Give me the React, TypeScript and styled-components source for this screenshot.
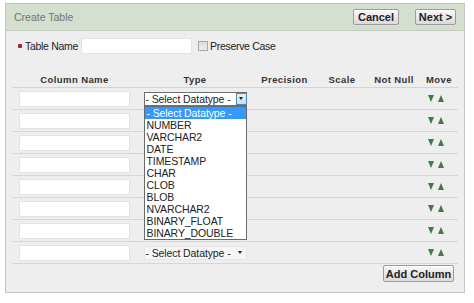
import React from "react";
import styled, { createGlobalStyle } from "styled-components";

const GlobalStyle = createGlobalStyle`
  html, body {
    margin: 0;
    padding: 0;
    background: #ffffff;
    font-family: "Liberation Sans", Arial, sans-serif;
  }
`;

const datatypes = [
  "- Select Datatype -",
  "NUMBER",
  "VARCHAR2",
  "DATE",
  "TIMESTAMP",
  "CHAR",
  "CLOB",
  "BLOB",
  "NVARCHAR2",
  "BINARY_FLOAT",
  "BINARY_DOUBLE",
];

const headers = ["Column Name", "Type", "Precision", "Scale", "Not Null", "Move"];

export default function App() {
  const rows = Array.from({ length: 8 }, (_, i) => i);

  const typeCell = (i: number) => {
    if (i === 0) {
      return (
        <SelectWrap>
          <OpenSelect>
            <SelectText>- Select Datatype -</SelectText>
            <DropBtn>
              <Caret />
            </DropBtn>
          </OpenSelect>
          <List>
            {datatypes.map((d, k) => (
              <Option key={d} $active={k === 0}>
                {d}
              </Option>
            ))}
          </List>
        </SelectWrap>
      );
    }
    // rows hidden under the open list
    if (i < 7) return <HiddenSelect />;
    return (
      <FlatSelect>
        <SelectText>- Select Datatype -</SelectText>
        <Caret />
      </FlatSelect>
    );
  };

  return (
    <>
      <GlobalStyle />
      <Page>
        <Panel>
          <Header>
            <Title>Create Table</Title>
            <HeaderButtons>
              <Button $w={46}>Cancel</Button>
              <Button $w={41}>Next &gt;</Button>
            </HeaderButtons>
          </Header>

          <NameRow>
            <Required />
            <Label>Table Name</Label>
            <TextInput $w={111} />
            <Check />
            <Label>Preserve Case</Label>
          </NameRow>

          <Grid>
            <HeadRow>
              {headers.map((h) => (
                <HeadCell key={h}>{h}</HeadCell>
              ))}
            </HeadRow>
            {rows.map((i) => (
              <Row key={i}>
                <Cell>
                  <TextInput $w={111} />
                </Cell>
                <Cell>{typeCell(i)}</Cell>
                <Cell />
                <Cell />
                <Cell />
                <MoveCell>
                  <Arrow $down />
                  <Arrow />
                </MoveCell>
              </Row>
            ))}
          </Grid>

          <Footer>
            <Button $w={71} $h={17}>Add Column</Button>
          </Footer>
        </Panel>
      </Page>
    </>
  );
}

const Page = styled.div`
  padding: 3px 0 0 5px;
`;

const Panel = styled.div`
  width: 458px;
  height: 288px;
  border: 1px solid #c6c6c6;
  background: #eeeeee;
  display: flex;
  flex-direction: column;
`;

const Header = styled.div`
  height: 26px;
  border-bottom: 1px solid #c3ccbf;
  background: #d5dfd0;
  display: flex;
  align-items: center;
  justify-content: space-between;
  padding: 0 8px;
`;

const Title = styled.div`
  font-size: 10.5px;
  color: #6c786c;
`;

const HeaderButtons = styled.div`
  display: flex;
  gap: 16px;
`;

const Button = styled.button<{ $w: number; $h?: number }>`
  width: ${(p) => p.$w}px;
  height: ${(p) => p.$h ?? 16}px;
  padding: 0;
  border: 1px solid #9c9c9c;
  border-radius: 2px;
  background: linear-gradient(#f8f8f8, #dadada);
  box-shadow: inset 0 1px 0 #ffffff;
  font-family: "Liberation Sans", Arial, sans-serif;
  font-weight: bold;
  font-size: 11px;
  color: #222222;
  display: flex;
  align-items: center;
  justify-content: center;
`;

const NameRow = styled.div`
  display: flex;
  align-items: center;
  padding: 7px 0 0 12px;
  height: 16px;
`;

const Required = styled.span`
  width: 4px;
  height: 4px;
  border-radius: 1px;
  background: #b3202a;
  margin-right: 3px;
`;

const Label = styled.span`
  font-size: 10.5px;
  color: #222222;
  letter-spacing: -0.3px;
`;

const TextInput = styled.div<{ $w: number }>`
  width: ${(p) => p.$w}px;
  height: 16px;
  box-sizing: border-box;
  background: #ffffff;
  border: 1px solid #e3e3e3;
  margin: 0 3px;
`;

const Check = styled.span`
  width: 10px;
  height: 10px;
  box-sizing: border-box;
  border: 1px solid #a8a8a8;
  background: linear-gradient(#dcdcdc, #eeeeee);
  margin: 0 2px 0 3px;
`;

const Grid = styled.div`
  margin: 17px 0 0 6px;
  width: 446px;
  display: flex;
  flex-direction: column;
`;

const columns = "125px 116px 63px 52px 52px 38px";

const HeadRow = styled.div`
  display: grid;
  grid-template-columns: ${columns};
  height: 16px;
  border-bottom: 1px solid #d3d3d3;
  align-items: center;
`;

const HeadCell = styled.div`
  text-align: center;
  font-size: 9.5px;
  font-weight: bold;
  letter-spacing: 0.4px;
  color: #333333;
`;

const Row = styled.div`
  display: grid;
  grid-template-columns: ${columns};
  height: 21px;
  border-bottom: 1px solid #d6d6d6;
  align-items: center;
`;

const Cell = styled.div`
  display: flex;
  justify-content: center;
  align-items: center;
`;

const MoveCell = styled.div`
  display: flex;
  align-items: center;
  gap: 4px;
  padding-left: 8px;
`;

const Arrow = styled.span<{ $down?: boolean }>`
  width: 0;
  height: 0;
  border-left: 3px solid transparent;
  border-right: 3px solid transparent;
  ${(p) =>
    p.$down
      ? "border-top: 7px solid #3f7c44;"
      : "border-bottom: 7px solid #3f7c44;"}
`;

const SelectWrap = styled.div`
  position: relative;
  width: 103px;
`;

const OpenSelect = styled.div`
  height: 14px;
  box-sizing: border-box;
  display: flex;
  align-items: stretch;
  background: #ffffff;
  border: 1px solid #6f6f6f;
  border-right: none;
`;

const SelectText = styled.span`
  flex: 1;
  font-size: 10.5px;
  line-height: 12px;
  letter-spacing: -0.1px;
  color: #222222;
  padding-left: 1px;
  white-space: nowrap;
`;

const DropBtn = styled.span`
  width: 11px;
  margin-left: 1px;
  box-sizing: border-box;
  border: 1px solid #4a86b8;
  background: linear-gradient(#e3f1fb, #c3dff4);
  display: flex;
  align-items: center;
  justify-content: center;
`;

const Caret = styled.span`
  width: 0;
  height: 0;
  border-left: 2.5px solid transparent;
  border-right: 2.5px solid transparent;
  border-top: 3px solid #222222;
  margin-right: 4px;
  ${DropBtn} & {
    margin-right: 0;
  }
`;

const HiddenSelect = styled.div`
  width: 103px;
  height: 14px;
`;

const FlatSelect = styled.div`
  width: 103px;
  height: 14px;
  box-sizing: border-box;
  display: flex;
  align-items: center;
  background: #f6f6f6;
  border: 1px solid #e6e6e6;
`;

const List = styled.div`
  position: absolute;
  top: 100%;
  left: 0;
  width: 103px;
  box-sizing: border-box;
  background: #ffffff;
  border: 1px solid #6a6a6a;
  z-index: 2;
`;

const Option = styled.div<{ $active?: boolean }>`
  height: 12px;
  font-size: 10.5px;
  line-height: 12px;
  letter-spacing: -0.1px;
  padding-left: 2px;
  white-space: nowrap;
  color: ${(p) => (p.$active ? "#ffffff" : "#222222")};
  background: ${(p) => (p.$active ? "#3399ff" : "transparent")};
`;

const Footer = styled.div`
  display: flex;
  justify-content: flex-end;
  padding: 1px 10px 0 0;
`;
